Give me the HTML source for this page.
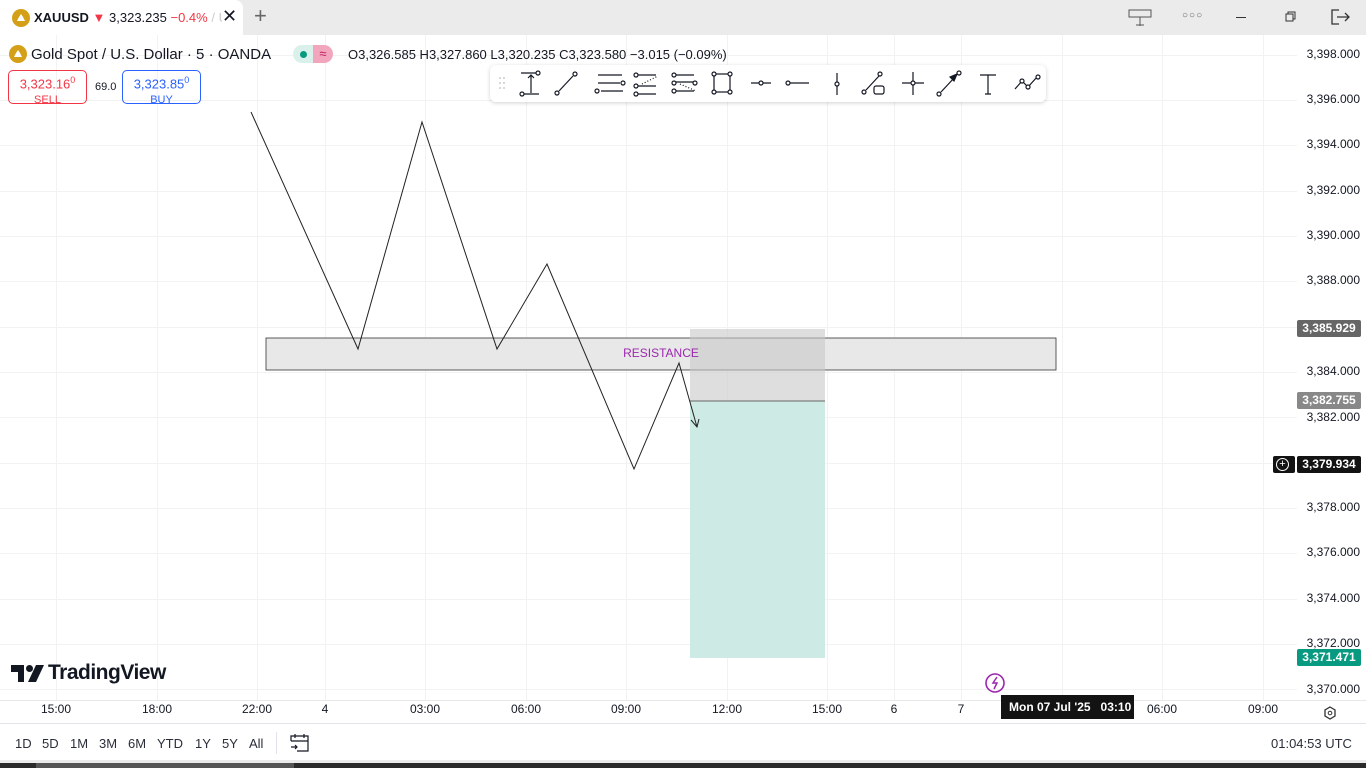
<!DOCTYPE html>
<html><head><meta charset="utf-8"><style>
*{margin:0;padding:0;box-sizing:border-box}
body{width:1366px;height:768px;overflow:hidden;background:#fff;font-family:"Liberation Sans","DejaVu Sans",sans-serif;position:relative;color:#131722}
.abs{position:absolute}
.top{left:0;top:0;width:1366px;height:35px;background:#ebebeb}
.tab{left:0;top:0;width:243px;height:35px;background:#fff;border-top-right-radius:8px}
.pl{position:absolute;right:6px;font-size:12px;color:#131722}
.tag{position:absolute;left:1297px;width:64px;height:17px;color:#fff;font-size:12px;font-weight:bold;text-align:center;line-height:17px;border-radius:2px}
.tl{position:absolute;top:702px;font-size:12px;color:#131722;transform:translateX(-50%)}
.rb{position:absolute;top:736px;font-size:13px;color:#2a2e39}
</style></head><body>
<div class="abs top"></div>
<div class="abs tab"></div>
<svg class="abs" style="left:12px;top:9px" width="18" height="18"><circle cx="9" cy="9" r="9" fill="#d4a017"/><path d="M5 12h8l-2-4h-4z M7 8l2-3 2 3z" fill="#fff"/></svg>
<div class="abs" style="left:34px;top:10px;font-size:13px;font-weight:bold">XAUUSD <span style="color:#f23645">▼</span> <span style="font-weight:normal">3,323.235</span> <span style="color:#f23645;font-weight:normal">−0.4%</span> <span style="color:#ccc;font-weight:normal">/ U</span></div>
<div class="abs" style="left:222px;top:6px;font-size:18px;background:#fff;width:16px">✕</div>
<div class="abs" style="left:254px;top:3px;font-size:22px;color:#666;font-weight:300">+</div>
<svg class="abs" style="left:1128px;top:9px" width="26" height="18" fill="none" stroke="#555"><rect x="1" y="1" width="22" height="7"/><path d="M12 8v9M8 16h8"/></svg>
<div class="abs" style="left:1182px;top:10px;font-size:10px;color:#666;letter-spacing:1px">○○○</div>
<div class="abs" style="left:1236px;top:17px;width:10px;height:1px;background:#333"></div>
<svg class="abs" style="left:1285px;top:11px" width="12" height="12" fill="none" stroke="#333"><rect x="1" y="3" width="7" height="7"/><path d="M3 3V1h7v7H8"/></svg>
<svg class="abs" style="left:1331px;top:9px" width="20" height="16" fill="none" stroke="#333" stroke-width="1.3"><path d="M8 1H1v14h7M6 8h12M14 4l4 4-4 4"/></svg>

<svg class="abs" style="left:0;top:35px" width="1366" height="733">
<g stroke="#f2f2f2" stroke-width="1">
<line x1="0" y1="20.5" x2="1297" y2="20.5"/><line x1="0" y1="65.5" x2="1297" y2="65.5"/><line x1="0" y1="110.5" x2="1297" y2="110.5"/><line x1="0" y1="156.5" x2="1297" y2="156.5"/><line x1="0" y1="201.5" x2="1297" y2="201.5"/><line x1="0" y1="246.5" x2="1297" y2="246.5"/><line x1="0" y1="292.5" x2="1297" y2="292.5"/><line x1="0" y1="337.5" x2="1297" y2="337.5"/><line x1="0" y1="382.5" x2="1297" y2="382.5"/><line x1="0" y1="428.5" x2="1297" y2="428.5"/><line x1="0" y1="473.5" x2="1297" y2="473.5"/><line x1="0" y1="518.5" x2="1297" y2="518.5"/><line x1="0" y1="564.5" x2="1297" y2="564.5"/><line x1="0" y1="609.5" x2="1297" y2="609.5"/><line x1="0" y1="654.5" x2="1297" y2="654.5"/>
<line x1="56.5" y1="0" x2="56.5" y2="665"/><line x1="157.5" y1="0" x2="157.5" y2="665"/><line x1="257.5" y1="0" x2="257.5" y2="665"/><line x1="325.5" y1="0" x2="325.5" y2="665"/><line x1="425.5" y1="0" x2="425.5" y2="665"/><line x1="526.5" y1="0" x2="526.5" y2="665"/><line x1="626.5" y1="0" x2="626.5" y2="665"/><line x1="727.5" y1="0" x2="727.5" y2="665"/><line x1="827.5" y1="0" x2="827.5" y2="665"/><line x1="894.5" y1="0" x2="894.5" y2="665"/><line x1="961.5" y1="0" x2="961.5" y2="665"/><line x1="1062.5" y1="0" x2="1062.5" y2="665"/><line x1="1162.5" y1="0" x2="1162.5" y2="665"/><line x1="1263.5" y1="0" x2="1263.5" y2="665"/>
</g>
<line x1="0" y1="665.5" x2="1366" y2="665.5" stroke="#e8e8e8"/>
<line x1="0" y1="688.5" x2="1366" y2="688.5" stroke="#e0e3eb"/>
<rect x="690" y="366" width="135" height="257" fill="#cdeae5"/>
<rect x="266" y="303" width="790" height="32" fill="#e8e8e8" stroke="#333" stroke-width="0.8"/>
<rect x="690" y="294" width="135" height="72" fill="#c8c8c8" fill-opacity="0.6"/>
<line x1="690" y1="366" x2="825" y2="366" stroke="#666"/>
<text x="661" y="322" font-size="12" fill="#9c27b0" text-anchor="middle" font-family="Liberation Sans">RESISTANCE</text>
<polyline points="251,77 358,314 422,87 497,314 547,229 634,434 679,328 697,392" fill="none" stroke="#222" stroke-width="1"/>
<path d="M691 385l6 7 2-8" fill="none" stroke="#222"/>
<circle cx="995" cy="648" r="9" fill="none" stroke="#9c27b0" stroke-width="1.6"/><path d="M997 642l-4 6h4l-3 6" fill="none" stroke="#9c27b0" stroke-width="1.5"/>
<path d="M1330 672l5 3v6l-5 3-5-3v-6z" fill="none" stroke="#333" stroke-width="1.3"/><circle cx="1330" cy="678" r="1.8" fill="none" stroke="#333"/>
</svg>

<svg class="abs" style="left:9px;top:45px" width="18" height="18"><circle cx="9" cy="9" r="9" fill="#d4a017"/><path d="M5 12h8l-2-4h-4z M7 8l2-3 2 3z" fill="#fff"/></svg>
<div class="abs" style="left:31px;top:46px;font-size:15px">Gold Spot / U.S. Dollar · 5 · OANDA</div>
<div class="abs" style="left:293px;top:45px;width:20px;height:18px;background:#daf1eb;border-radius:9px 0 0 9px"></div>
<div class="abs" style="left:300px;top:51px;width:7px;height:7px;background:#089981;border-radius:50%"></div>
<div class="abs" style="left:313px;top:45px;width:20px;height:18px;background:#f2a6bd;border-radius:0 9px 9px 0;color:#c2185b;font-size:13px;text-align:center;line-height:18px">≈</div>
<div class="abs" style="left:348px;top:47px;font-size:13px">O3,326.585 H3,327.860 L3,320.235 C3,323.580 −3.015 (−0.09%)</div>
<div class="abs" style="left:8px;top:70px;width:79px;height:34px;border:1px solid #f23645;border-radius:5px;color:#f23645;text-align:center;font-size:13px;line-height:15px;padding-top:2px">3,323.16<sup style="font-size:9px">0</sup><br><span style="font-size:11px">SELL</span></div>
<div class="abs" style="left:95px;top:81px;font-size:11px">69.0</div>
<div class="abs" style="left:122px;top:70px;width:79px;height:34px;border:1px solid #2962ff;border-radius:5px;color:#2962ff;text-align:center;font-size:13px;line-height:15px;padding-top:2px">3,323.85<sup style="font-size:9px">0</sup><br><span style="font-size:11px">BUY</span></div>

<div class="abs" style="left:490px;top:65px;width:556px;height:37px;background:#fff;border-radius:6px;box-shadow:0 1px 4px rgba(0,0,0,.18)"></div>
<svg class="abs" style="left:490px;top:65px" width="556" height="37" fill="none" stroke="#131722" stroke-width="1.2">
<g fill="#ccc" stroke="none"><circle cx="10" cy="13" r="1"/><circle cx="14" cy="13" r="1"/><circle cx="10" cy="18" r="1"/><circle cx="14" cy="18" r="1"/><circle cx="10" cy="23" r="1"/><circle cx="14" cy="23" r="1"/></g>
<path d="M31 8h16M31 29h18M41 28V10M38 13l3-3 3 3"/><circle cx="48" cy="8" r="2" fill="#fff"/><circle cx="32" cy="29" r="2" fill="#fff"/>
<path d="M69 26l14-15"/><circle cx="67" cy="28" r="2" fill="#fff"/><circle cx="85" cy="9" r="2" fill="#fff"/>
<path d="M108 10h24M108 18h22M111 26h22"/><circle cx="133" cy="18" r="2" fill="#fff"/><circle cx="107" cy="26" r="2" fill="#fff"/>
<path d="M148 10h18M148 21h18M148 29h18"/><path d="M152 19l16-8" stroke-dasharray="1 2"/><circle cx="146" cy="10" r="2" fill="#fff"/><circle cx="146" cy="21" r="2" fill="#fff"/><circle cx="146" cy="29" r="2" fill="#fff"/>
<path d="M186 10h18M186 17h18M186 26h18"/><path d="M190 19l16 7" stroke-dasharray="1 2"/><circle cx="184" cy="10" r="2" fill="#fff"/><circle cx="184" cy="18" r="2" fill="#fff"/><circle cx="184" cy="26" r="2" fill="#fff"/><circle cx="205" cy="18" r="2" fill="#fff"/>
<rect x="224" y="9" width="16" height="18"/><circle cx="224" cy="9" r="2" fill="#fff"/><circle cx="240" cy="9" r="2" fill="#fff"/><circle cx="224" cy="27" r="2" fill="#fff"/><circle cx="240" cy="27" r="2" fill="#fff"/>
<path d="M261 18h20"/><circle cx="271" cy="18" r="2" fill="#fff"/>
<path d="M300 18h19"/><circle cx="298" cy="18" r="2" fill="#fff"/>
<path d="M347 8v22"/><circle cx="347" cy="19" r="2" fill="#fff"/>
<path d="M376 25l13-14"/><circle cx="374" cy="27" r="2" fill="#fff"/><circle cx="390" cy="9" r="2" fill="#fff"/><rect x="384" y="21" width="10" height="8" rx="2"/>
<path d="M423 7v23M412 18h22"/><circle cx="423" cy="18" r="2" fill="#fff"/>
<path d="M451 27l14-15"/><path d="M460 12l7-3-3 7z" fill="#131722"/><circle cx="449" cy="29" r="2" fill="#fff"/><circle cx="469" cy="8" r="2" fill="#fff"/>
<path d="M490 10h16M498 10v19M495 29h6"/>
<path d="M525 24l7-8 6 6 9-10"/><circle cx="532" cy="16" r="2" fill="#fff"/><circle cx="538" cy="22" r="2" fill="#fff"/><circle cx="548" cy="12" r="2" fill="#fff"/>
</svg>

<div class="pl" style="top:47px">3,398.000</div>
<div class="pl" style="top:92px">3,396.000</div>
<div class="pl" style="top:137px">3,394.000</div>
<div class="pl" style="top:183px">3,392.000</div>
<div class="pl" style="top:228px">3,390.000</div>
<div class="pl" style="top:273px">3,388.000</div>
<div class="pl" style="top:364px">3,384.000</div>
<div class="pl" style="top:410px">3,382.000</div>
<div class="pl" style="top:500px">3,378.000</div>
<div class="pl" style="top:545px">3,376.000</div>
<div class="pl" style="top:591px">3,374.000</div>
<div class="pl" style="top:636px">3,372.000</div>
<div class="pl" style="top:682px">3,370.000</div>
<div class="tag" style="top:320px;background:#666">3,385.929</div>
<div class="tag" style="top:392px;background:#888">3,382.755</div>
<div class="tag" style="top:456px;background:#131313">3,379.934</div>
<div class="abs" style="left:1273px;top:456px;width:22px;height:17px;background:#131313;border-radius:2px"></div>
<div class="abs" style="left:1276px;top:458px;width:13px;height:13px;border:1px solid #fff;border-radius:50%;color:#fff;font-size:11px;line-height:11px;text-align:center">+</div>
<div class="tag" style="top:649px;background:#089981">3,371.471</div>

<svg class="abs" style="left:11px;top:665px" width="33" height="18"><path d="M0 0h13v17h-6v-10h-7z" fill="#131722"/><circle cx="18.5" cy="3.5" r="3.5" fill="#131722"/><path d="M25 0h8l-8 17h-8z" fill="#131722"/></svg>
<div class="abs" style="left:48px;top:661px;font-size:21px;font-weight:bold;letter-spacing:-0.5px">TradingView</div>

<div class="tl" style="left:56px">15:00</div><div class="tl" style="left:157px">18:00</div><div class="tl" style="left:257px">22:00</div><div class="tl" style="left:325px">4</div><div class="tl" style="left:425px">03:00</div><div class="tl" style="left:526px">06:00</div><div class="tl" style="left:626px">09:00</div><div class="tl" style="left:727px">12:00</div><div class="tl" style="left:827px">15:00</div><div class="tl" style="left:894px">6</div><div class="tl" style="left:961px">7</div><div class="tl" style="left:1162px">06:00</div><div class="tl" style="left:1263px">09:00</div>
<div class="abs" style="left:1001px;top:695px;width:133px;height:24px;background:#131313;color:#fff;font-size:12px;font-weight:bold;line-height:24px;padding-left:8px">Mon 07 Jul '25&nbsp;&nbsp; 03:10</div>

<div class="rb" style="left:15px">1D</div><div class="rb" style="left:42px">5D</div><div class="rb" style="left:70px">1M</div><div class="rb" style="left:99px">3M</div><div class="rb" style="left:128px">6M</div><div class="rb" style="left:157px">YTD</div><div class="rb" style="left:195px">1Y</div><div class="rb" style="left:222px">5Y</div><div class="rb" style="left:249px">All</div>
<div class="abs" style="left:276px;top:732px;width:1px;height:22px;background:#e0e3eb"></div>
<svg class="abs" style="left:290px;top:733px" width="20" height="20" fill="none" stroke="#131722" stroke-width="1.2"><path d="M1 8V3h17v15H7M1 8h17M5 1v4M14 1v4M1 14h6M5 12l2 2-2 2"/></svg>
<div class="rb" style="left:1271px">01:04:53 UTC</div>
<div class="abs" style="left:0;top:760px;width:1366px;height:3px;background:#ebebeb"></div>
<div class="abs" style="left:0;top:763px;width:1366px;height:5px;background:#2a2a2a"></div>
<div class="abs" style="left:36px;top:763px;width:258px;height:5px;background:#555"></div>
</body></html>
